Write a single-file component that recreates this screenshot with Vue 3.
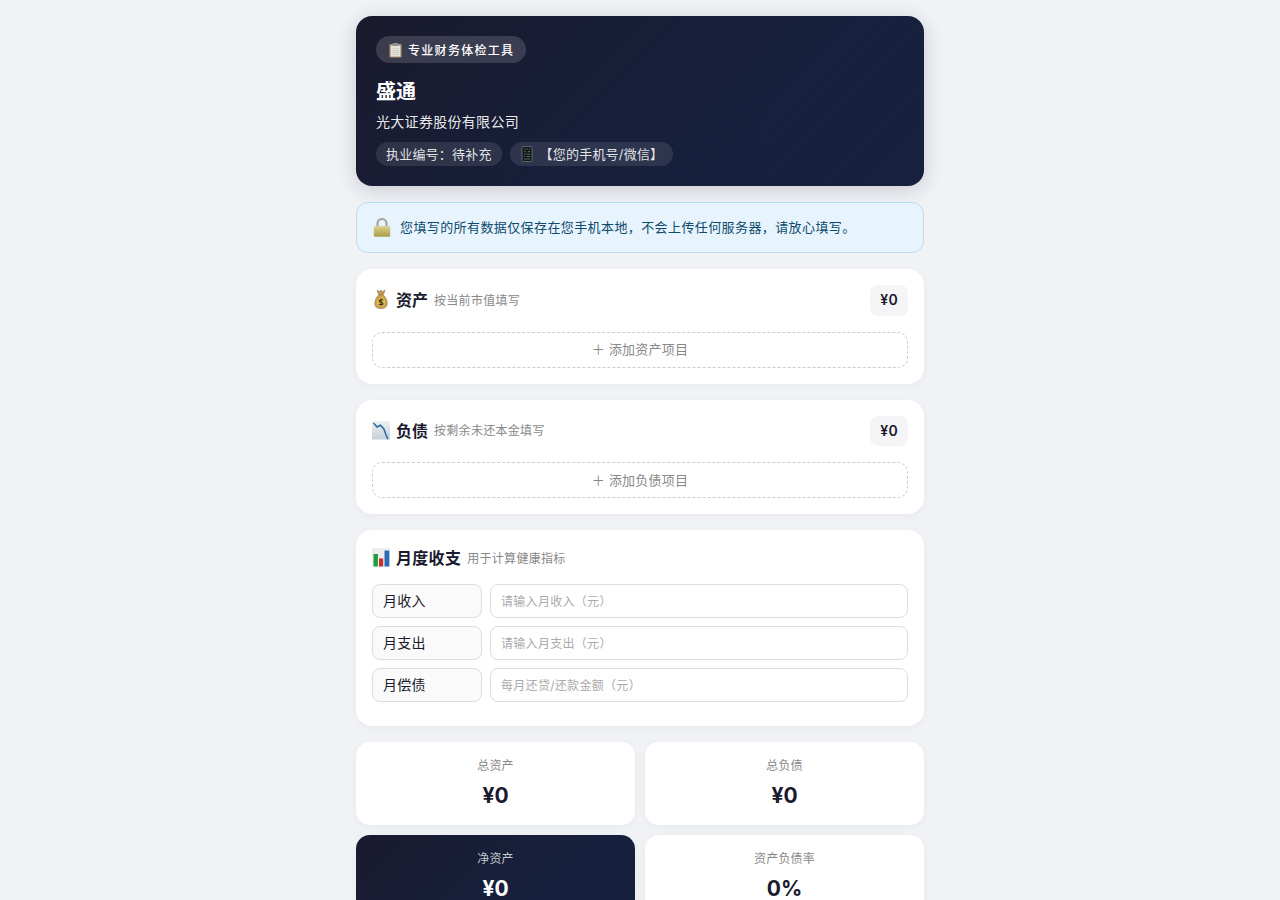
<script setup>
import { ref } from 'vue';

const incomeRows = ref([
  { label: '月收入', hint: '请输入月收入（元）' },
  { label: '月支出', hint: '请输入月支出（元）' },
  { label: '月偿债', hint: '每月还贷/还款金额（元）' }
]);

const stats = ref([
  { label: '总资产', value: '¥0' },
  { label: '总负债', value: '¥0' },
  { label: '净资产', value: '¥0', dark: true },
  { label: '资产负债率', value: '0%' }
]);
</script>

<template>
  <div class="page">
    <header class="hero">
      <div class="tag">
        <svg class="tag-icon" viewBox="0 0 16 16">
          <rect x="1.500" y="1.500" width="13" height="14.500" rx="1" fill="#a58c6c" />
          <rect x="2.800" y="3.200" width="10.400" height="11.800" fill="#e4e3da" />
          <path d="M4.500 6.500h7M4.500 8.500h7M4.500 10.500h7M4.500 12.500h7" stroke="#c4c3bb" stroke-width=".7" />
          <rect x="5" y=".6" width="6" height="3" rx=".7" fill="#8d8f92" />
        </svg>
        <span>专业财务体检工具</span>
      </div>
      <h1 class="name">盛通</h1>
      <div class="company">光大证券股份有限公司</div>
      <div class="chips">
        <span class="chip">执业编号：待补充</span>
        <span class="chip">
          <svg class="phone-icon" viewBox="0 0 12 16">
            <rect x="1" y=".5" width="10" height="15" rx="1" fill="#14181f" stroke="#6f736e" stroke-width=".8" />
            <path d="M3 3h1.500M5.500 3H7M8 3h1M3 5.500h1.500M7 5.500h2M3 8h2M6 8h3M3 10.500h1M5.500 10.500H9M3 13h6" stroke="#5f7f68" stroke-width=".8" />
          </svg>
          <span>【您的手机号/微信】</span>
        </span>
      </div>
    </header>

    <div class="notice">
      <svg class="lock-icon" viewBox="0 0 18 20">
        <defs>
          <linearGradient id="lockBody" x1="0" y1="0" x2="0" y2="1">
            <stop offset="0" stop-color="#ddd391" />
            <stop offset="1" stop-color="#a99b48" />
          </linearGradient>
        </defs>
        <path d="M4.500 10V6.500a4.500 4.500 0 0 1 9 0V10" fill="none" stroke="#a3a596" stroke-width="2.200" />
        <rect x=".8" y="9" width="16.400" height="10.800" rx="1.500" fill="url(#lockBody)" />
      </svg>
      <span>您填写的所有数据仅保存在您手机本地，不会上传任何服务器，请放心填写。</span>
    </div>

    <section class="card">
      <div class="card-head">
        <div class="card-title">
          <svg class="title-icon" viewBox="0 0 18 20">
            <path d="M5 1.400l2.300 1 1.700-1 1.700 1 2.300-1-1.800 4.300H6.800z" fill="#c29a52" stroke="#8b6a32" stroke-width=".6" />
            <path d="M7 5.800h4c2.500 2 4.200 5.400 4.200 8.600 0 3.600-2.400 5-6.200 5s-6.200-1.400-6.200-5c0-3.200 1.700-6.600 4.200-8.600z" fill="#c9a258" stroke="#8b6a32" stroke-width=".6" />
            <circle cx="9" cy="13" r="4.400" fill="#e0b93e" />
            <path d="M11 11.200c-.5-.7-3.700-.9-3.900.6-.2 1.700 4 1.100 3.900 2.800-.1 1.400-3.200 1.300-4 .4M9 9.400v7.200" fill="none" stroke="#3c3528" stroke-width="1.100" />
          </svg>
          <strong>资产</strong>
          <small>按当前市值填写</small>
        </div>
        <div class="sum">¥0</div>
      </div>
      <button class="add-btn" type="button">＋ 添加资产项目</button>
    </section>

    <section class="card">
      <div class="card-head">
        <div class="card-title">
          <svg class="title-icon" viewBox="0 0 18 20">
            <defs>
              <linearGradient id="chartBg" x1="0" y1="0" x2="0" y2="1">
                <stop offset="0" stop-color="#eef1f3" />
                <stop offset="1" stop-color="#c5d0d8" />
              </linearGradient>
            </defs>
            <rect x="0" y="1" width="18" height="18.500" fill="url(#chartBg)" />
            <path d="M1.500 3l3.500 4 3.500-1.800 3.500 4 1.800 5 2 5" fill="none" stroke="#2c6f9f" stroke-width="1.600" />
          </svg>
          <strong>负债</strong>
          <small>按剩余未还本金填写</small>
        </div>
        <div class="sum">¥0</div>
      </div>
      <button class="add-btn" type="button">＋ 添加负债项目</button>
    </section>

    <section class="card card-income">
      <div class="card-title income-title">
        <svg class="title-icon" viewBox="0 0 18 20">
          <rect x="0" y="1" width="18" height="18.500" fill="#eceef0" />
          <rect x="1.500" y="7" width="4.400" height="12.500" fill="#1f9d3a" />
          <rect x="7" y="11.500" width="4.200" height="8" fill="#c8302b" />
          <rect x="12.500" y="3.500" width="4.800" height="16" fill="#2a6db5" />
        </svg>
        <strong>月度收支</strong>
        <small>用于计算健康指标</small>
      </div>
      <div v-for="row in incomeRows" :key="row.label" class="income-row">
        <div class="income-label">{{ row.label }}</div>
        <input class="income-input" type="text" :placeholder="row.hint" />
      </div>
    </section>

    <div class="stats">
      <div v-for="item in stats" :key="item.label" class="stat" :class="{ dark: item.dark }">
        <div class="stat-label">{{ item.label }}</div>
        <div class="stat-value">{{ item.value }}</div>
      </div>
    </div>
  </div>
</template>

<style>
html, body { margin: 0; background: #f0f2f6; }
</style>

<style scoped>
.page {
  width: 568px; margin: 0 auto; padding: 16px 0;
  display: flex; flex-direction: column; gap: 16px;
  font-family: Inter, "Noto Sans CJK SC", sans-serif;
  color: #1a1a2e;
  letter-spacing: 0.3px;
}
.hero {
  height: 170px; box-sizing: border-box; padding: 20px;
  border-radius: 16px; color: #fff;
  background: linear-gradient(135deg, #1a1a2e 0%, #171f3a 50%, #16213e 100%);
  box-shadow: 0 4px 20px rgba(26, 26, 46, 0.18);
}
.tag {
  display: inline-flex; align-items: center; gap: 5px;
  height: 27px; padding: 0 12px; border-radius: 14px;
  background: rgba(255, 255, 255, 0.15);
  font-size: 12px; font-weight: 500; letter-spacing: 1.3px;
  vertical-align: top;
}
.tag-icon { width: 15px; height: 16px; }
.name { margin: 14px 0 0; font-size: 20px; line-height: 30px; font-weight: 700; letter-spacing: 0; }
.company { margin-top: 5px; font-size: 14px; line-height: 20px; color: rgba(255, 255, 255, 0.92); }
.chips { display: flex; gap: 8px; margin-top: 10px; }
.chip {
  display: inline-flex; align-items: center; gap: 6px;
  height: 24px; box-sizing: border-box; padding: 0 10px 2px; border-radius: 12px;
  background: rgba(255, 255, 255, 0.1);
  font-size: 13px; letter-spacing: 0.2px; color: rgba(255, 255, 255, 0.88);
}
.phone-icon { width: 12px; height: 16px; margin: 2px 1px 0; }
.notice {
  display: flex; align-items: center; gap: 9px;
  height: 51px; box-sizing: border-box; padding: 0 16px 2px;
  border: 1px solid #b8dcee; border-radius: 12px;
  background: #e8f4fd; color: #0c4a6e; font-size: 13px; letter-spacing: 0.4px;
}
.lock-icon { width: 18px; height: 20px; }
.card {
  box-sizing: border-box; padding: 16px; border-radius: 16px;
  background: #fff; box-shadow: 0 2px 8px rgba(26, 26, 46, 0.04);
}
.card-head { display: flex; align-items: center; justify-content: space-between; margin-bottom: 16px; }
.card-title { display: flex; align-items: center; gap: 6px; padding-bottom: 2px; }
.card-title strong { font-size: 16px; font-weight: 700; color: #1a1a2e; letter-spacing: 0; }
.card-title small { font-size: 12px; color: #888; }
.title-icon { width: 18px; height: 20px; flex: none; }
.sum {
  height: 30.600px; box-sizing: border-box; padding: 0 10px; border-radius: 8px; background: #f5f5f7;
  font-size: 14px; font-weight: 600; line-height: 29px;
}
.add-btn {
  display: block; width: 100%; height: 36px; padding: 0 0 2px;
  border: 1px dashed #ccc; border-radius: 10px; background: #fff;
  font: inherit; font-size: 13px; color: #888; letter-spacing: 0.2px;
}
.income-title { height: 24px; box-sizing: border-box; margin-bottom: 14px; }
.income-title strong { letter-spacing: 0.3px; }
.income-row { display: flex; gap: 8px; margin-bottom: 8px; }
.income-label {
  width: 110px; height: 34px; box-sizing: border-box; padding: 0 10px;
  border: 1px solid #ddd; border-radius: 8px; background: #fafafa;
  font-size: 14px; line-height: 31px;
}
.income-input {
  flex: 1; min-width: 0; height: 34px; box-sizing: border-box; padding: 0 10px;
  border: 1px solid #ddd; border-radius: 8px; background: #fff;
  font: inherit; font-size: 12px; letter-spacing: 0.3px; outline: none;
}
.income-input::placeholder { color: #aaa; }
.card-income { padding-bottom: 16px; }
.stats { display: grid; grid-template-columns: 1fr 1fr; gap: 10px; }
.stat {
  height: 83px; box-sizing: border-box; padding: 15px 0 0; border-radius: 14px;
  background: #fff; text-align: center; box-shadow: 0 2px 8px rgba(26, 26, 46, 0.04);
}
.stat.dark { background: linear-gradient(135deg, #1a1a2e 0%, #171f3a 50%, #16213e 100%); color: #fff; }
.stat-label { font-size: 12px; line-height: 18px; color: #888; letter-spacing: 0.2px; }
.stat.dark .stat-label { color: rgba(255, 255, 255, 0.75); }
.stat-value { margin-top: 6px; font-size: 21px; line-height: 30px; font-weight: 700; letter-spacing: 0; }
</style>
